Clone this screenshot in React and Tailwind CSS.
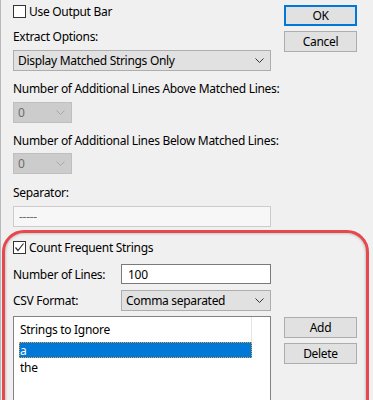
import React from 'react';

function Chevron({ color = '#333333' }) {
  return (
    <svg width="9" height="5" viewBox="0 0 9 5" className="shrink-0">
      <path d="M0.5 0.5 L4.5 4.5 L8.5 0.5" stroke={color} fill="none" strokeWidth="1" />
    </svg>
  );
}

function Combo({ value, disabled, className = '' }) {
  return (
    <div
      className={`flex items-center justify-between h-[21px] pl-[4px] pr-[6px] border ${
        disabled ? 'bg-[#cccccc] border-[#bfbfbf] text-[#6d6d6d]' : 'bg-[#e1e1e1] border-[#adadad] text-black'
      } ${className}`}
    >
      <span>{value}</span>
      <Chevron color={disabled ? '#a8a8a8' : '#333333'} />
    </div>
  );
}

function Button({ children, primary, className = '' }) {
  return (
    <div
      className={`flex items-center justify-center w-[73px] h-[21px] bg-[#e1e1e1] ${
        primary ? 'border-2 border-[#0078d7]' : 'border border-[#adadad]'
      } ${className}`}
    >
      {children}
    </div>
  );
}

function Checkbox({ checked, label }) {
  return (
    <div className="flex items-center h-[13px]">
      <div className="w-[13px] h-[13px] bg-white border border-[#333333] flex items-center justify-center">
        {checked && (
          <svg width="11" height="11" viewBox="0 0 11 11">
            <path d="M1.5 5.5 L4 8.5 L9.5 1.5" stroke="#333333" strokeWidth="1.2" fill="none" />
          </svg>
        )}
      </div>
      <span className="ml-[3px]">{label}</span>
    </div>
  );
}

export default function App() {
  return (
    <div className="w-[373px] h-[400px] overflow-hidden bg-[#f0f0f0] border-l border-[#b9b9b9] font-['Segoe_UI','Noto_Sans',sans-serif] text-[12px] leading-[15px] tracking-[-0.3px] whitespace-nowrap text-black">
      {/* Top section */}
      <div className="flex pl-[12px] pt-[5px]">
        <div className="w-[258px]">
          <Checkbox label="Use Output Bar" />
          <div className="mt-[11px]">Extract Options:</div>
          <Combo value="Display Matched Strings Only" className="mt-[6px]" />
          <div className="mt-[10px]">Number of Additional Lines Above Matched Lines:</div>
          <Combo value="0" disabled className="mt-[6px] w-[59px]" />
          <div className="mt-[10px]">Number of Additional Lines Below Matched Lines:</div>
          <Combo value="0" disabled className="mt-[5px] w-[59px]" />
          <div className="mt-[11px]">Separator:</div>
          <div className="mt-[6px] h-[21px] border border-[#cccccc] bg-[#f7f7f7] pl-[5px] flex items-center text-[#6d6d6d]">
            -----
          </div>
        </div>
        <div className="ml-[13px] flex flex-col gap-[5px]">
          <Button primary>OK</Button>
          <Button>Cancel</Button>
        </div>
      </div>

      {/* Count frequent strings section (highlighted) */}
      <div className="mt-[3px] ml-[1px] w-[367px] h-[200px] border-[3px] border-[#e5484d] rounded-t-[22px] shadow-[inset_0_0_3px_rgba(0,0,0,0.35)] pl-[8px] pt-[8px]">
        <div className="flex">
          <div className="w-[258px]">
            <Checkbox checked label="Count Frequent Strings" />
            <div className="mt-[10px] flex items-center">
              <span className="w-[108px]">Number of Lines:</span>
              <div className="flex-1 h-[20px] bg-white border border-[#7a7a7a] pl-[6px] flex items-center">100</div>
            </div>
            <div className="mt-[6px] flex items-center">
              <span className="w-[108px]">CSV Format:</span>
              <Combo value="Comma separated" className="flex-1" />
            </div>
            <div className="mt-[5px] h-[100px] bg-white border border-[#828282]">
              <div className="ml-[5px] w-[233px] h-[25px] border-r border-[#e5e5e5] pl-[1px] flex items-center">
                Strings to Ignore
              </div>
              <div className="ml-[5px] w-[233px] h-[16px] bg-[#0078d7] border border-dotted border-[#f0a030] text-white flex items-center">
                a
              </div>
              <div className="ml-[5px] pl-[1px] h-[18px] flex items-center">the</div>
            </div>
          </div>
          <div className="ml-[13px] pt-[76px] flex flex-col gap-[5px]">
            <Button>Add</Button>
            <Button>Delete</Button>
          </div>
        </div>
      </div>
    </div>
  );
}
